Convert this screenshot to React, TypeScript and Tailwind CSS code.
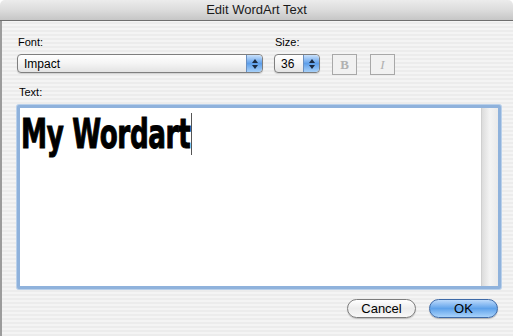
const Stepper = () => (
  <div className="flex flex-col items-center justify-center gap-[2px] h-full w-[16px] rounded-r-[4px] bg-gradient-to-b from-[#c9e1fb] via-[#5d9ee9] to-[#a7d0f8] border-l border-[#6a8fc0]">
    <svg width="6" height="4" viewBox="0 0 6 4"><path d="M0 4 L3 0 L6 4 Z" fill="#1b2a40" /></svg>
    <svg width="6" height="4" viewBox="0 0 6 4"><path d="M0 0 L3 4 L6 0 Z" fill="#1b2a40" /></svg>
  </div>
);

const PopUp = ({ value, width }: { value: string; width: string }) => (
  <div className={`flex items-stretch h-[19px] ${width} rounded-[4px] border border-[#7f7f7f] bg-gradient-to-b from-white via-[#f4f4f4] to-[#e3e3e3] shadow-[0_1px_1px_rgba(0,0,0,0.15)]`}>
    <div className="flex-1 flex items-center pl-[6px] text-[12px] text-black">{value}</div>
    <Stepper />
  </div>
);

const StyleButton = ({ children, italic }: { children: string; italic?: boolean }) => (
  <div className="w-[25px] h-[21px] flex items-center justify-center border border-[#a8a8a8] bg-[#f1f1f1] text-[13px] text-[#b0b0b0] font-bold [font-family:'Liberation_Serif',serif]">
    <span className={italic ? "italic font-normal" : ""}>{children}</span>
  </div>
);

export default function App() {
  return (
    <div className="w-[513px] h-[336px] flex flex-col overflow-hidden [font-family:'Liberation_Sans',Arial,sans-serif]">
      {/* title bar */}
      <div className="h-[21px] flex items-center justify-center border-b border-[#6e6e6e] bg-gradient-to-b from-[#ececec] via-[#dcdcdc] to-[#c6c6c6] text-[13px] text-[#1a1a1a] rounded-t-[5px]">
        Edit WordArt Text
      </div>

      <div className="flex-1 flex flex-col border-l-2 border-[#9c9c9c] pl-[15px] pr-[14px] pt-[15px] bg-[repeating-linear-gradient(0deg,#ececec_0px,#ececec_2px,#f4f4f4_2px,#f4f4f4_4px)]">
        <div className="flex items-start">
          <div className="flex flex-col">
            <div className="h-[13px] leading-[13px] text-[11px] text-black pl-[1px]">Font:</div>
            <div className="mt-[5px]">
              <PopUp value="Impact" width="w-[246px]" />
            </div>
          </div>
          <div className="flex flex-col ml-[11px]">
            <div className="h-[13px] leading-[13px] text-[11px] text-black pl-[1px]">Size:</div>
            <div className="mt-[5px]">
              <PopUp value="36" width="w-[46px]" />
            </div>
          </div>
          <div className="flex gap-[13px] ml-[12px] mt-[18px]">
            <StyleButton>B</StyleButton>
            <StyleButton italic>I</StyleButton>
          </div>
        </div>

        <div className="mt-[11px] h-[13px] leading-[13px] text-[11px] text-black pl-[2px]">Text:</div>

        <div className="mt-[6px] h-[184px] w-[484px] rounded-[2px] border-[3px] border-[#8fb2dc] shadow-[0_0_0_1px_#b9d0ea] flex bg-white">
          <div className="flex-1 flex items-start pl-[1px] pt-[3px]">
            <div className="w-[170px] whitespace-nowrap">
              <span className="inline-block origin-left scale-x-[0.71] text-[41px] leading-[46px] font-bold text-black tracking-[-0.5px] [-webkit-text-stroke:1px_black] [font-family:'DejaVu_Sans_Condensed','DejaVu_Sans',sans-serif]">
                My Wordart
              </span>
            </div>
            <span className="w-[1px] h-[42px] mt-[2px] bg-[#555]" />
          </div>
          <div className="w-[17px] bg-gradient-to-r from-[#dcdcdc] via-[#f4f4f4] to-[#eaeaea] border-l border-[#d0d0d0]" />
        </div>

        <div className="mt-[10px] flex justify-end gap-[13px] pr-[1px]">
          <div className="w-[69px] h-[19px] flex items-center justify-center rounded-full border border-[#7d7d7d] bg-gradient-to-b from-white via-[#ececec] to-[#f8f8f8] text-[13px] text-black shadow-[0_1px_1px_rgba(0,0,0,0.2)]">
            Cancel
          </div>
          <div className="w-[69px] h-[19px] flex items-center justify-center rounded-full border border-[#3e6aa8] bg-gradient-to-b from-[#bcdafb] via-[#5fa2ea] to-[#a9d3fb] text-[13px] text-black shadow-[0_1px_1px_rgba(0,0,0,0.25)]">
            OK
          </div>
        </div>
      </div>
    </div>
  );
}
